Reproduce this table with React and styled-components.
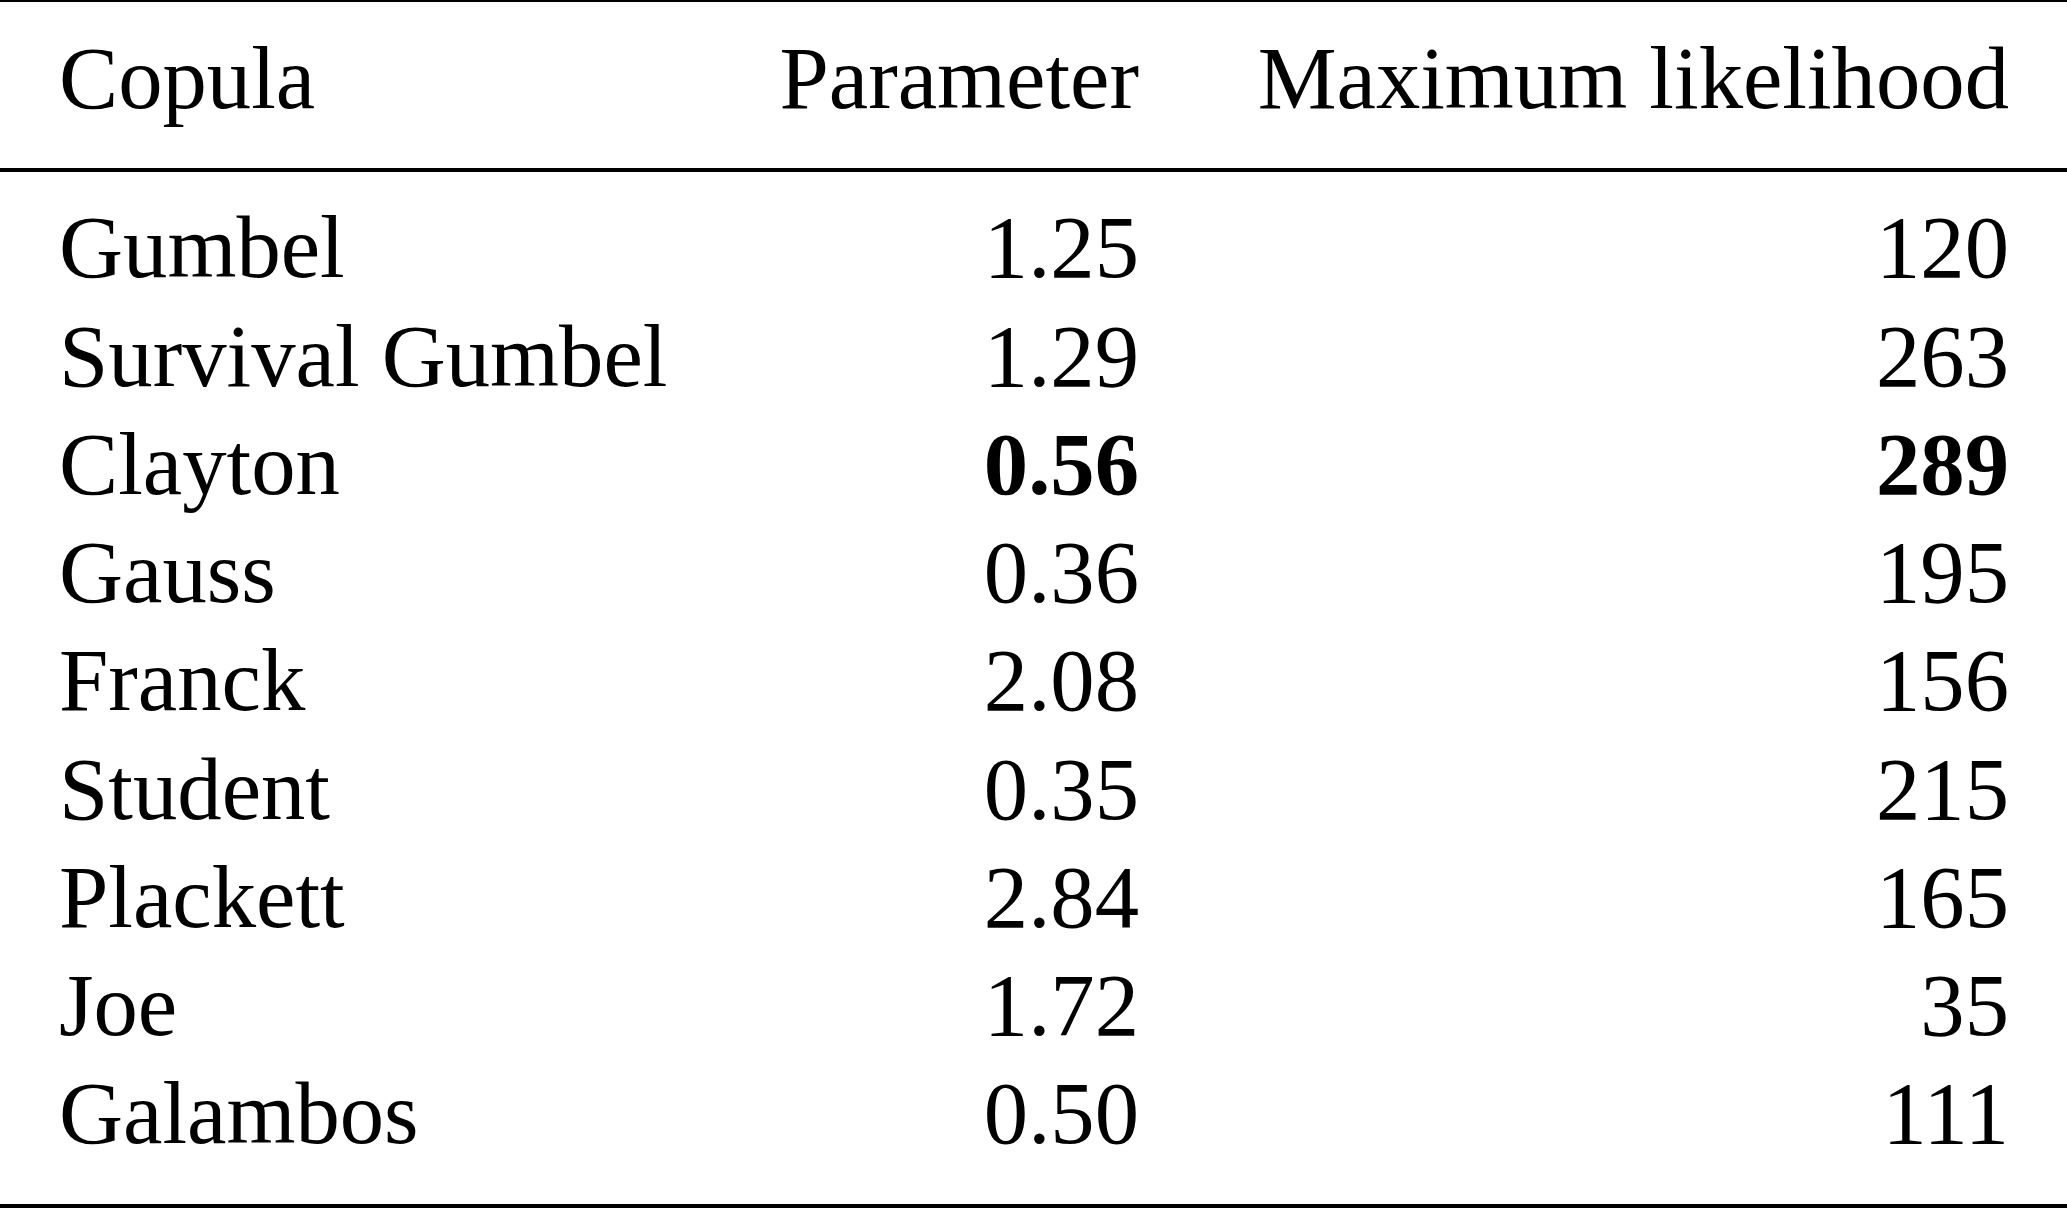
import React from 'react';
import styled, { createGlobalStyle } from 'styled-components';

const GlobalStyle = createGlobalStyle`
  html, body {
    margin: 0;
    padding: 0;
    background: #fff;
  }
  body {
    font-family: "Liberation Serif", "Times New Roman", serif;
    color: #000;
  }
`;

const rows = [
  { name: 'Gumbel', param: '1.25', ml: '120' },
  { name: 'Survival Gumbel', param: '1.29', ml: '263' },
  { name: 'Clayton', param: '0.56', ml: '289', best: true },
  { name: 'Gauss', param: '0.36', ml: '195' },
  { name: 'Franck', param: '2.08', ml: '156' },
  { name: 'Student', param: '0.35', ml: '215' },
  { name: 'Plackett', param: '2.84', ml: '165' },
  { name: 'Joe', param: '1.72', ml: '35' },
  { name: 'Galambos', param: '0.50', ml: '111' },
];

const Table = styled.table`
  width: 2067px;
  table-layout: fixed;
  border-collapse: separate;
  border-spacing: 0;
  font-size: 88.7px;
  line-height: 108.25px;
  font-weight: 400;
`;

const HeadCell = styled.th`
  font-weight: 400;
  text-align: ${(p) => p.$align || 'left'};
  padding: 22px ${(p) => p.$padRight || 0}px 36px ${(p) => p.$padLeft || 0}px;
  border-top: 2px solid #000;
  border-bottom: 4px solid #000;
  white-space: nowrap;
`;

const Row = styled.tr`
  &:first-child td {
    padding-top: 21px;
  }
  &:last-child td {
    padding-bottom: 36px;
    border-bottom: 4px solid #000;
  }
`;

const Cell = styled.td`
  text-align: ${(p) => p.$align || 'left'};
  font-weight: ${(p) => (p.$bold ? 700 : 400)};
  padding: 0 ${(p) => p.$padRight || 0}px 0 ${(p) => p.$padLeft || 0}px;
  white-space: nowrap;
`;

export default function App() {
  return (
    <>
      <GlobalStyle />
      <Table>
        <colgroup>
          <col style={{ width: 700 }} />
          <col style={{ width: 439 }} />
          <col style={{ width: 928 }} />
        </colgroup>
        <thead>
          <tr>
            <HeadCell $padLeft={59}>Copula</HeadCell>
            <HeadCell $align="right">Parameter</HeadCell>
            <HeadCell $align="right" $padRight={58}>Maximum likelihood</HeadCell>
          </tr>
        </thead>
        <tbody>
          {rows.map((r) => (
            <Row key={r.name}>
              <Cell $padLeft={59}>{r.name}</Cell>
              <Cell $align="right" $bold={r.best}>{r.param}</Cell>
              <Cell $align="right" $padRight={58} $bold={r.best}>{r.ml}</Cell>
            </Row>
          ))}
        </tbody>
      </Table>
    </>
  );
}
